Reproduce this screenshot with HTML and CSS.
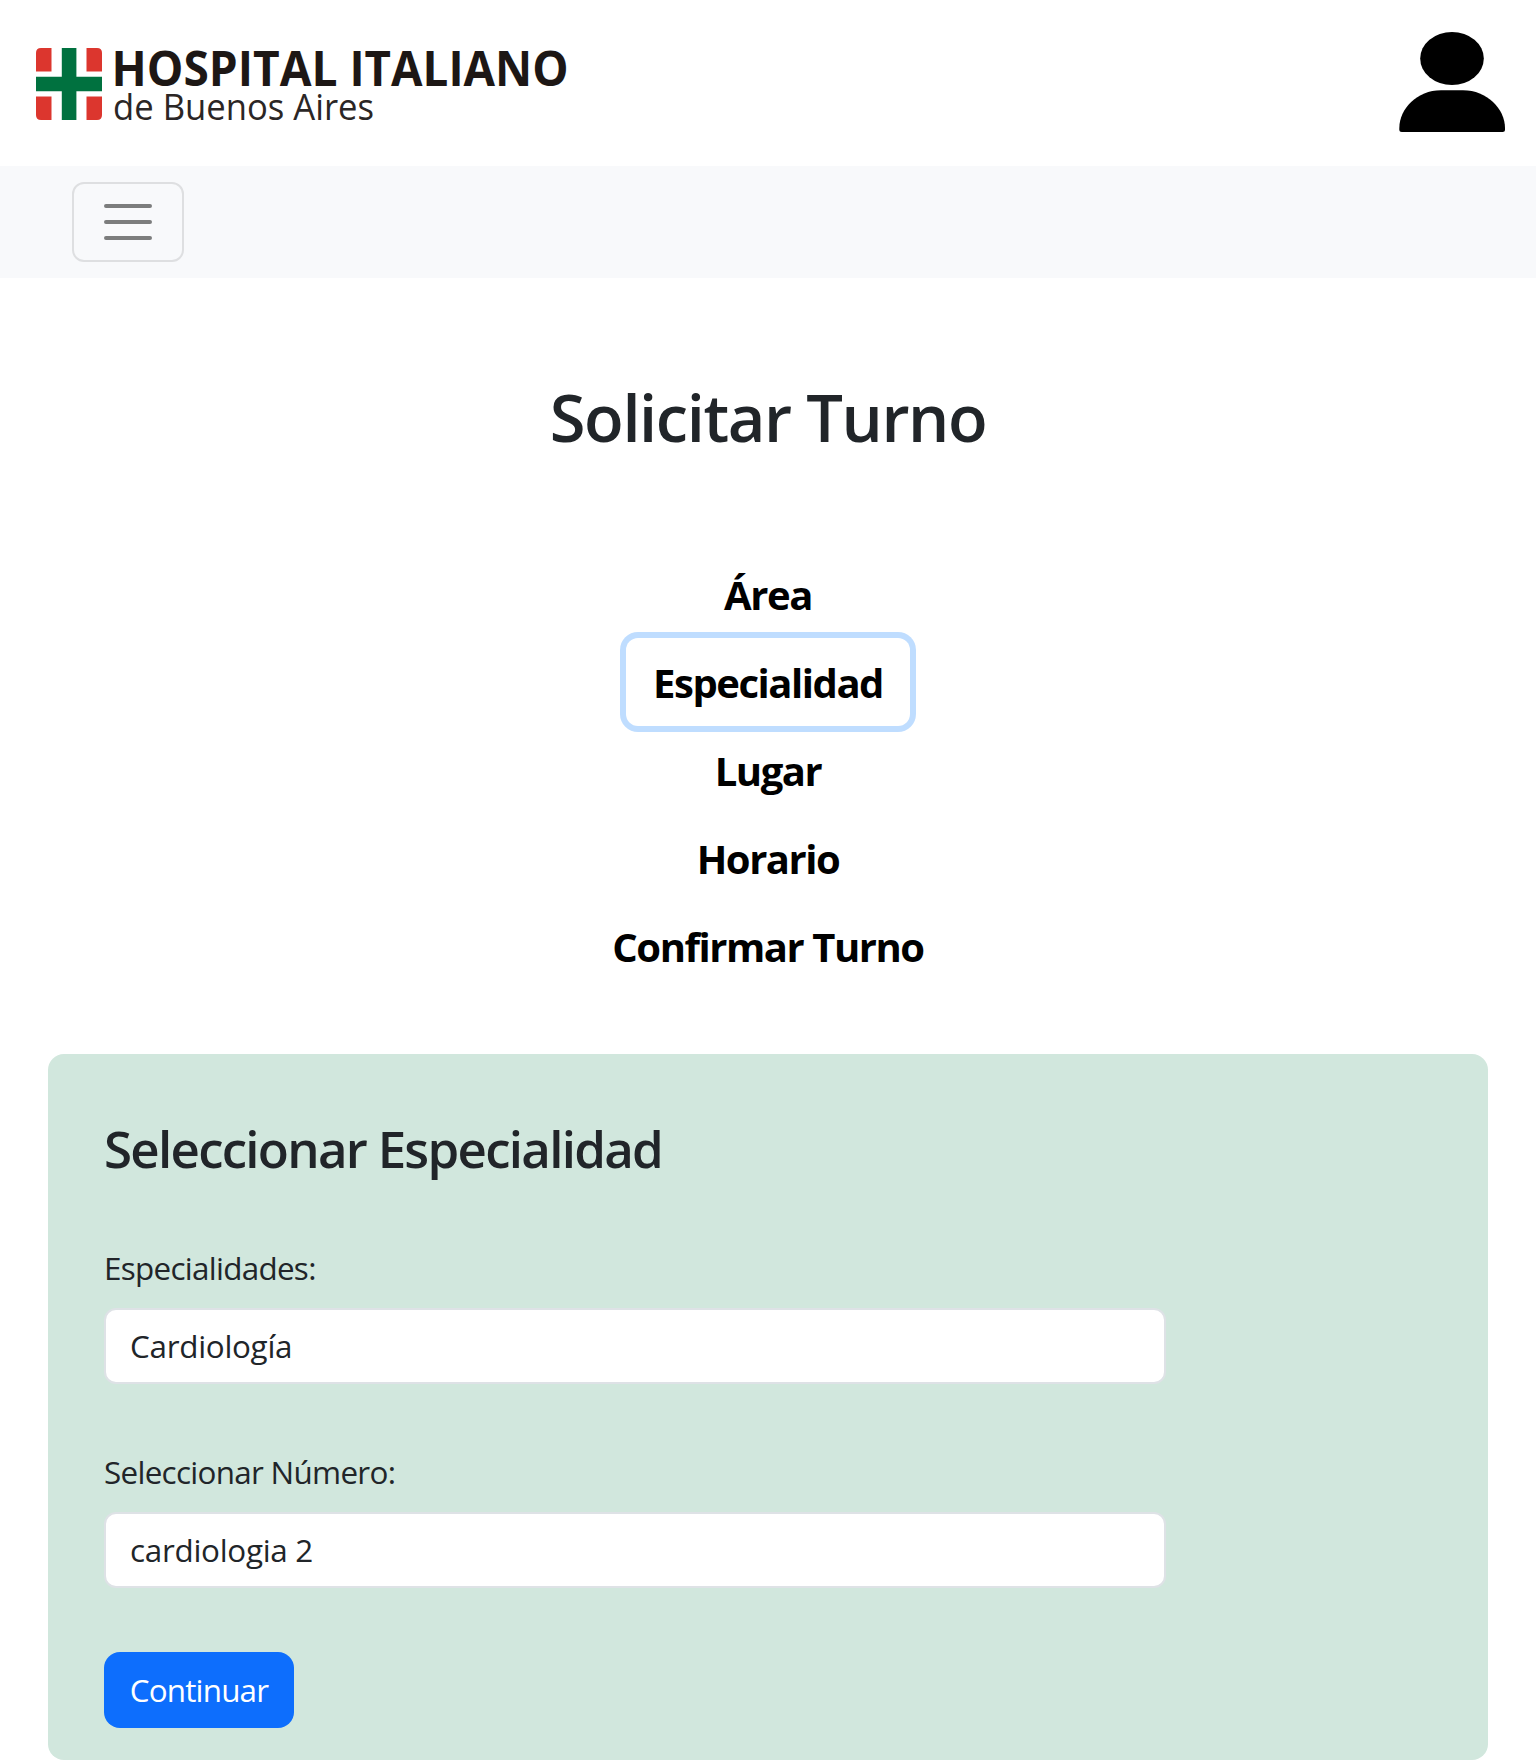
FILE: index.html
```
<!DOCTYPE html>
<html lang="es">
<head>
  <meta charset="utf-8">
  <title>Solicitar Turno</title>
  <link rel="stylesheet" href="styles.css">
</head>
<body>
  <header class="header">
    <svg class="logo" width="540" height="80" viewBox="0 0 540 80" role="img" aria-label="Hospital Italiano de Buenos Aires">
      <g fill="#dc362e">
        <path d="M5 4h10.5v23.5H0V9q0-5 5-5z"/>
        <path d="M50.5 4H61q5 0 5 5v18.5H50.5z"/>
        <path d="M0 52.500h15.500V76H5q-5 0-5-5z"/>
        <path d="M50.500 52.500H66V71q0 5-5 5H50.500z"/>
      </g>
      <path fill="#00713f" d="M25.800 4h14.600v28.700H66v14.500H40.400V76H25.800V47.200H0V32.700h25.800z"/>
      <text class="logo-name" x="75.500" y="42" textLength="226" lengthAdjust="spacingAndGlyphs">HOSPITAL</text>
      <text class="logo-name" x="313.500" y="42" textLength="219" lengthAdjust="spacingAndGlyphs">ITALIANO</text>
      <text class="logo-city" x="77" y="75.500" textLength="261" lengthAdjust="spacingAndGlyphs">de Buenos Aires</text>
    </svg>
    <svg class="user" width="106" height="100" viewBox="0 0 106 100" aria-hidden="true">
      <ellipse cx="53" cy="26.500" rx="31.800" ry="26.500"/>
      <path d="M42 58.300H64C88 58.300 106 77 106 96V97.500Q106 100 103.500 100H2.800Q0.300 100 0.300 97.500V96C0.300 77 18 58.300 42 58.300z"/>
    </svg>
  </header>

  <nav class="navbar">
    <button class="toggler" type="button" aria-label="Menú">
      <svg width="60" height="60" viewBox="0 0 30 30"><path d="M4 7h22M4 15h22M4 23h22" fill="none" stroke="#7c7d7d" stroke-width="2" stroke-linecap="round"/></svg>
    </button>
  </nav>

  <main>
    <h1 class="title">Solicitar Turno</h1>
    <div class="steps">
      <button class="step" type="button">Área</button>
      <button class="step step-active" type="button">Especialidad</button>
      <button class="step" type="button">Lugar</button>
      <button class="step" type="button">Horario</button>
      <button class="step" type="button">Confirmar Turno</button>
    </div>

    <section class="card">
      <h2 class="card-title">Seleccionar Especialidad</h2>
      <div class="field">
        <div class="label">Especialidades:</div>
        <div class="control">Cardiología</div>
      </div>
      <div class="field">
        <div class="label">Seleccionar Número:</div>
        <div class="control">cardiologia 2</div>
      </div>
      <button class="submit" type="button">Continuar</button>
    </section>
  </main>
</body>
</html>
```
FILE: styles.css
```
* { box-sizing: border-box; }

body {
  margin: 0;
  background: #fff;
  color: #212529;
  font-family: "Open Sans", "Noto Sans", sans-serif;
  font-size: 31.4px;
  line-height: 48px;
}

button { font: inherit; border: 0; background: none; }
svg { display: block; }

.header {
  display: flex;
  justify-content: space-between;
  align-items: flex-start;
  height: 166px;
  padding: 32px 31px 0 36px;
}
.logo { margin-top: 12px; overflow: visible; }
.logo-name { font-size: 48px; font-weight: 700; fill: #1d1715; }
.logo-city { font-size: 36px; font-weight: 400; fill: #2b2625; }

.navbar {
  display: flex;
  align-items: center;
  height: 112px;
  padding-left: 72px;
  background: #f8f9fb;
}
.toggler {
  display: flex;
  align-items: center;
  justify-content: center;
  width: 112px;
  height: 80px;
  padding: 0;
  border: 2px solid #dedfe1;
  border-radius: 12px;
}

.title {
  margin: 100px 0 94px;
  text-align: center;
  font-size: 65px;
  font-weight: 600;
  line-height: 78px;
  letter-spacing: -1.4px;
}

.steps { display: flex; flex-direction: column; align-items: center; }
.step {
  height: 88px;
  padding: 1px 27.5px 0;
  border-radius: 12px;
  color: #000;
  font-size: 40px;
  font-weight: 700;
  line-height: 88px;
  letter-spacing: -1.45px;
}
.step-active { box-shadow: 0 0 0 6px #bfddff; }

.card {
  margin: 64px 48px 0;
  padding: 64px 56px 32px;
  border-radius: 16px;
  background: #d1e7dd;
}
.card-title {
  margin: 0 0 65px;
  font-size: 51px;
  font-weight: 600;
  line-height: 61px;
  letter-spacing: -1.72px;
}
.field { margin-bottom: 64px; width: 1062px; }
.label { margin-bottom: 16px; letter-spacing: -0.7px; }
.control {
  height: 76px;
  padding: 0 24px;
  border: 2px solid #dee2e6;
  border-radius: 12px;
  background: #fff;
  line-height: 72px;
  letter-spacing: -0.28px;
}
.submit {
  display: block;
  width: 190px;
  height: 76px;
  padding: 0;
  border-radius: 16px;
  background: #0d6efd;
  color: #fff;
  line-height: 76px;
  letter-spacing: -0.8px;
}
```
